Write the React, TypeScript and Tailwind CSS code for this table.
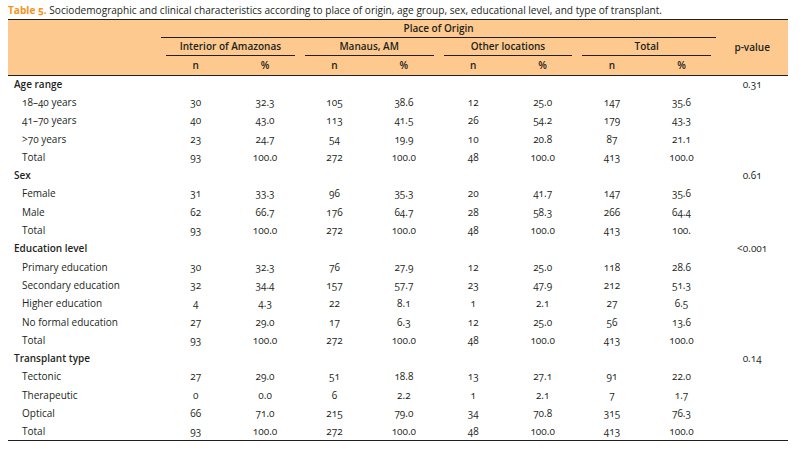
const groups = ['Interior of Amazonas', 'Manaus, AM', 'Other locations', 'Total'];

type Row = { label: string; vals: string[] };
type Section = { title: string; p: string; rows: Row[] };

const sections: Section[] = [
  {
    title: 'Age range',
    p: '0.31',
    rows: [
      { label: '18–40 years', vals: ['30', '32.3', '105', '38.6', '12', '25.0', '147', '35.6'] },
      { label: '41–70 years', vals: ['40', '43.0', '113', '41.5', '26', '54.2', '179', '43.3'] },
      { label: '>70 years', vals: ['23', '24.7', '54', '19.9', '10', '20.8', '87', '21.1'] },
      { label: 'Total', vals: ['93', '100.0', '272', '100.0', '48', '100.0', '413', '100.0'] },
    ],
  },
  {
    title: 'Sex',
    p: '0.61',
    rows: [
      { label: 'Female', vals: ['31', '33.3', '96', '35.3', '20', '41.7', '147', '35.6'] },
      { label: 'Male', vals: ['62', '66.7', '176', '64.7', '28', '58.3', '266', '64.4'] },
      { label: 'Total', vals: ['93', '100.0', '272', '100.0', '48', '100.0', '413', '100.'] },
    ],
  },
  {
    title: 'Education level',
    p: '<0.001',
    rows: [
      { label: 'Primary education', vals: ['30', '32.3', '76', '27.9', '12', '25.0', '118', '28.6'] },
      { label: 'Secondary education', vals: ['32', '34.4', '157', '57.7', '23', '47.9', '212', '51.3'] },
      { label: 'Higher education', vals: ['4', '4.3', '22', '8.1', '1', '2.1', '27', '6.5'] },
      { label: 'No formal education', vals: ['27', '29.0', '17', '6.3', '12', '25.0', '56', '13.6'] },
      { label: 'Total', vals: ['93', '100.0', '272', '100.0', '48', '100.0', '413', '100.0'] },
    ],
  },
  {
    title: 'Transplant type',
    p: '0.14',
    rows: [
      { label: 'Tectonic', vals: ['27', '29.0', '51', '18.8', '13', '27.1', '91', '22.0'] },
      { label: 'Therapeutic', vals: ['0', '0.0', '6', '2.2', '1', '2.1', '7', '1.7'] },
      { label: 'Optical', vals: ['66', '71.0', '215', '79.0', '34', '70.8', '315', '76.3'] },
      { label: 'Total', vals: ['93', '100.0', '272', '100.0', '48', '100.0', '413', '100.0'] },
    ],
  },
];

export default function App() {
  return (
    <div className="min-h-screen bg-white px-2 pt-[2px] font-['Open_Sans',sans-serif] text-[#231f20] oldstyle-nums">
      <p className="h-[17px] text-[10.1px] leading-[17px]">
        <span className="font-bold text-[#f7941d]">Table 5.</span> Sociodemographic and clinical characteristics according
        to place of origin, age group, sex, educational level, and type of transplant.
      </p>

      <table className="w-[780px] table-fixed border-collapse text-[10px]">
        <colgroup>
          <col className="w-[153px]" />
          {Array.from({ length: 8 }).map((_, i) => (
            <col key={i} className="w-[69.4px]" />
          ))}
          <col className="w-[72px]" />
        </colgroup>
        <thead className="bg-[#fdc98e] font-semibold">
          <tr className="h-[18px] border-t border-[#231f20]">
            <th rowSpan={3} />
            <th colSpan={8} className="p-0 align-bottom font-semibold">
              <div className="flex h-[18px] items-center justify-center border-b border-[#231f20]">Place of Origin</div>
            </th>
            <th rowSpan={3} className="p-0 text-center font-semibold">p-value</th>
          </tr>
          <tr className="h-[18px]">
            {groups.map((g) => (
              <th key={g} colSpan={2} className="p-0 font-semibold">
                <div className="mx-[5px] flex h-[18px] items-center justify-center border-b border-[#231f20]">{g}</div>
              </th>
            ))}
          </tr>
          <tr className="h-[19px] border-b border-[#231f20]">
            {groups.map((g) => (
              <>
                <th key={g + 'n'} className="p-0 font-semibold">n</th>
                <th key={g + 'p'} className="p-0 font-semibold">%</th>
              </>
            ))}
          </tr>
        </thead>
        <tbody className="border-b border-[#231f20]">
          {sections.map((s) => (
            <>
              <tr key={s.title} className="h-[18.3px]">
                <td className="p-0 pl-[6px] font-semibold">{s.title}</td>
                <td colSpan={8} />
                <td className="p-0 text-center">{s.p}</td>
              </tr>
              {s.rows.map((r, i) => (
                <tr key={s.title + i} className="h-[18.3px]">
                  <td className="p-0 pl-[14px]">{r.label}</td>
                  {r.vals.map((v, j) => (
                    <td key={j} className="p-0 text-center">{v}</td>
                  ))}
                  <td />
                </tr>
              ))}
            </>
          ))}
        </tbody>
      </table>
    </div>
  );
}
